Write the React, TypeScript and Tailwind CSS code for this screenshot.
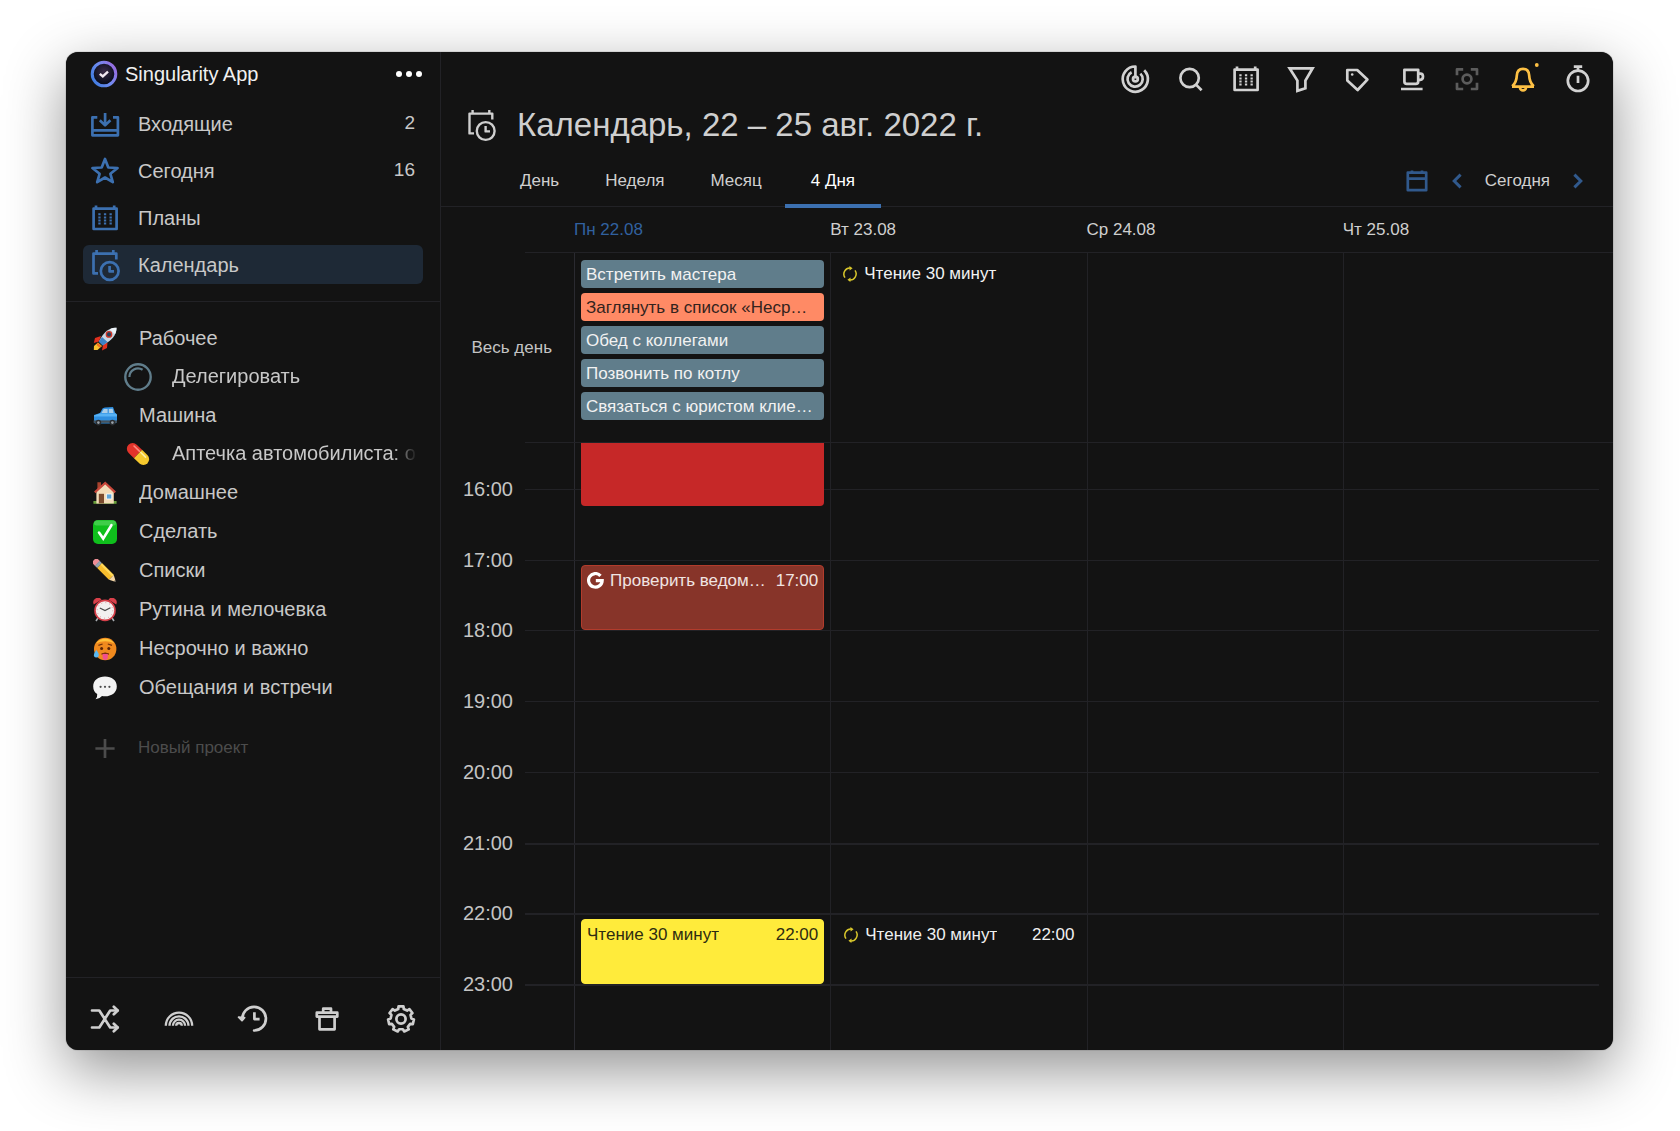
import React from "react";
import { clsx } from "clsx";

type IconProps = {
  className?: string;
  strokeWidth?: number;
  children?: React.ReactNode;
};

const Icon: React.FC<IconProps> = ({ className, strokeWidth = 2.7, children }) => (
  <svg
    viewBox="0 0 32 32"
    className={clsx("size-8 shrink-0 overflow-visible", className)}
    fill="none"
    stroke="currentColor"
    strokeWidth={strokeWidth}
    strokeLinejoin="round"
    aria-hidden="true"
  >
    {children}
  </svg>
);

const InboxIcon = () => (
  <Icon>
    <path d="M8.3 9.3H3.4V27.3H28.9V9.3H24M3.4 22.4H28.9" />
    <path d="M16.1 5V17M10.8 12.2L16.1 17.4L21.4 12.2" />
  </Icon>
);

const StarIcon = () => (
  <Icon>
    <path d="M16 4L19.3 12.5L28.6 13L21.4 18.8L23.8 27.2L16 22.5L8.2 27.2L10.6 18.8L3.4 13L12.7 12.5Z" />
  </Icon>
);

const PlansIcon = () => (
  <Icon>
    <path d="M4.6 6.6H27.6V27H4.6ZM7 3.6V7M25.2 3.6V7" />
    {[12.3, 15.4, 18.5, 21.6].map((y) => (
      <path key={y} strokeWidth={2} strokeLinejoin="miter" d={`M9.3 ${y}H11.6M14.9 ${y}H17.2M20.5 ${y}H22.8`} />
    ))}
  </Icon>
);

const CalendarClockIcon: React.FC<{ strokeWidth?: number }> = ({ strokeWidth }) => (
  <Icon strokeWidth={strokeWidth}>
    <path d="M9 24.4H4.5V4.6H27.3V10.6M7.6 1V4.6M24.3 1V4.6" />
    <circle cx="20.7" cy="22" r="8.9" />
    <path d="M20.6 17V22.4H25" />
  </Icon>
);

const ShuffleIcon = () => (
  <Icon>
    <path d="M3 7.5H10.3L21.2 24.5H28.5M3 24.5H10.3L21.2 7.5H28.5" strokeLinecap="round" />
    <path d="M24.8 3.8L28.7 7.5L24.8 11.3M24.8 20.8L28.7 24.5L24.8 28.2" strokeLinecap="round" />
  </Icon>
);

const RainbowIcon = () => (
  <Icon strokeWidth={2.3}>
    <path d="M2.8 22.8A13.2 13.2 0 0 1 29.2 22.8M6.5 22.8A9.5 9.5 0 0 1 25.5 22.8M9.9 22.8A6.1 6.1 0 0 1 22.1 22.8M13.2 22.8A2.8 2.8 0 0 1 18.8 22.8" />
  </Icon>
);

const HistoryIcon = () => (
  <Icon>
    <path d="M5.3 15.8A11.8 11.8 0 1 1 17.1 27.5" strokeLinecap="round" />
    <path d="M1.6 14.2L5 17.6L7.6 14.6Z" fill="currentColor" strokeWidth={1.8} />
    <path d="M17.4 9.3V16.1H22.6" />
  </Icon>
);

const TrashIcon = () => (
  <Icon>
    <path d="M8.5 13.6H23.6V26.3H8.5ZM5.8 9.7H26.3V13.6H5.8ZM12.2 5.7H20V9.7H12.2Z" />
  </Icon>
);

// seven teeth, each one a flat top between two short flanks
const gearPoints = Array.from({ length: 7 }, (_, i) => {
  const mid = (i * 2 * Math.PI) / 7 - Math.PI / 2;
  return [
    [-0.27, 10.4],
    [-0.19, 12.9],
    [0.19, 12.9],
    [0.27, 10.4],
  ].map(([a, r]) => `${16 + r * Math.cos(mid + a)},${16 + r * Math.sin(mid + a)}`);
})
  .flat()
  .join(" ");

const GearIcon = () => (
  <Icon>
    <polygon points={gearPoints} />
    <circle cx="16" cy="16" r="4.6" />
  </Icon>
);

const RadarIcon = () => (
  <Icon>
    <path d="M16.4 15.5V3.5A12.6 12.6 0 1 0 25.2 7.2" />
    <path d="M12.6 9.3A7.6 7.6 0 1 0 21.4 10.6" />
    <circle cx="16.4" cy="16" r="2.4" />
  </Icon>
);

const SearchIcon = () => (
  <Icon>
    <circle cx="15.6" cy="15" r="9.2" />
    <path d="M22 21.6L27.6 27.2" />
  </Icon>
);

const FunnelIcon = () => (
  <Icon>
    <path d="M4.6 5.3H27.6L20.4 17.6V25.2L12.4 27.8V17.6Z" strokeLinejoin="miter" />
  </Icon>
);

const TagIcon = () => (
  <Icon>
    <path d="M6.3 7H16.2L26.4 16.6L16.6 27L6.3 17.6Z" />
    <circle cx="11.2" cy="11.5" r="1.3" fill="currentColor" stroke="none" />
  </Icon>
);

const CupIcon = () => (
  <Icon>
    <path d="M8.4 6.8H22.2V18.4Q22.2 20.8 19.8 20.8H10.8Q8.4 20.8 8.4 18.4ZM22.2 10.6H24.4Q27 10.6 27 13.6T24.4 16.8H22.2M5 26H26.6" />
  </Icon>
);

const FocusIcon = () => (
  <Icon>
    <circle cx="16" cy="16" r="4.4" />
    <path d="M6 12.2V6.3H12.2M19.8 6.3H26V12.2M26 19.8V26H19.8M12.2 26H6V19.8" />
  </Icon>
);

const BellIcon = () => (
  <Icon>
    <path d="M5 23.6H27M5.2 23.2C9 20 9.6 17.4 9.8 12.6C10 8 12.4 5.8 16 5.8S22 8 22.2 12.6C22.4 17.4 23 20 26.8 23.2" />
    <path d="M13 24.4A3 3 0 0 0 19 24.4" />
    <circle cx="29.8" cy="2" r="1.9" fill="currentColor" stroke="none" />
  </Icon>
);

const TimerIcon = () => (
  <Icon>
    <circle cx="16" cy="17.8" r="10.2" />
    <path d="M11.8 3.6H20.2M16 3.6V7M16 12.8V20" />
  </Icon>
);

const DateIcon = () => (
  <Icon>
    <path d="M6.8 7.6H25.2V25.2H6.8ZM6.8 13.6H25.2M11 5.4V8M21 5.4V8" />
  </Icon>
);

const Chevron: React.FC<{ d: string }> = ({ d }) => (
  <Icon strokeWidth={3}>
    <path d={d} strokeLinejoin="miter" />
  </Icon>
);

const RepeatIcon = () => (
  <svg viewBox="0 0 16 16" className="size-4 shrink-0 text-[#d8c62c]" fill="none" stroke="currentColor" strokeWidth="1.5" aria-hidden="true">
    <path d="M8.8 2.2A6 6 0 0 0 3 11.6M7.2 13.8A6 6 0 0 0 13 4.4" />
    <path d="M7.4 0L10.6 2.2L7.6 4.4ZM8.6 11.6L5.4 13.8L8.4 16Z" fill="currentColor" stroke="none" />
  </svg>
);

const GoogleIcon = () => (
  <svg viewBox="0 0 16 16" className="size-[17px] shrink-0" fill="none" stroke="white" strokeWidth="3" aria-hidden="true">
    <path d="M12.7 3.6A6.4 6.4 0 1 0 14.3 8.1H8.3" />
  </svg>
);

const Logo = () => (
  <svg viewBox="0 0 28 28" className="size-7 shrink-0" aria-hidden="true">
    <defs>
      <linearGradient id="ring" x1="0" y1="0.8" x2="1" y2="0.2">
        <stop offset="0" stopColor="#3f7be0" />
        <stop offset="0.5" stopColor="#6f8cf0" />
        <stop offset="1" stopColor="#9a6be0" />
      </linearGradient>
      <radialGradient id="core" cx="0.5" cy="0.4">
        <stop offset="0" stopColor="#3a2b48" />
        <stop offset="1" stopColor="#0a0d1c" />
      </radialGradient>
    </defs>
    <circle cx="14" cy="14" r="11.8" fill="url(#core)" stroke="url(#ring)" strokeWidth="3" />
    <path d="M9.8 13.8L12.8 16.4L18 11.6" fill="none" stroke="#f2e9f2" strokeWidth="2.4" />
  </svg>
);

const Emoji: React.FC<{ children: React.ReactNode }> = ({ children }) => (
  <svg viewBox="0 0 24 24" className="size-6 shrink-0" aria-hidden="true">
    {children}
  </svg>
);

const Rocket = () => (
  <Emoji>
    <path d="M8 9L2 11L0.8 16L6 14.5ZM14.5 15.5L14 21L9 23.5L10 17.5Z" fill="#e0301e" />
    <path d="M5 15.5L9 19L4.5 23L0.8 23L1 19Z" fill="#f9c22e" />
    <path d="M4.4 15.6L8.8 19.6L6.4 20.6L3.6 18Z" fill="#f0701e" />
    <path d="M23.5 0.8C16 0.8 11 4.5 6 14.5L9.8 18.2C19 13.5 23.5 8 23.5 0.8Z" fill="#c9d6e2" />
    <path d="M9 10L5.8 14.8L9.8 18.4L14.5 15Z" fill="#3d83c6" />
    <path d="M23.5 0.8C20.6 0.8 18.6 1.3 16.8 2.2L22 7.2C23 5.4 23.5 3.2 23.5 0.8Z" fill="#eef3f7" />
    <circle cx="16" cy="7.4" r="2.7" fill="#26405c" stroke="#cf3325" strokeWidth="1.3" />
  </Emoji>
);

const Ring = () => (
  <svg viewBox="0 0 28 28" className="size-7 shrink-0 text-[#607d8b]" fill="none" stroke="currentColor" aria-hidden="true">
    <circle cx="14" cy="14" r="12.7" strokeWidth="2.4" />
    <path d="M5.4 14A8.6 8.6 0 0 1 18.6 6.7" strokeWidth="2.2" />
  </svg>
);

const Car = () => (
  <Emoji>
    <path d="M1 18V11L7 9L9.5 4.5Q10 3.6 12 3.4L20 3L22.2 9L24 10.5V18L22 19.6H2Z" fill="#2f8fe0" />
    <path d="M8.4 9L10.8 5H14.6V9ZM15.8 5L19.6 4.8L20.6 9H15.8Z" fill="#a9cde8" />
    <path d="M1 11.5L7 9.6H23L24 11V12.6H1Z" fill="#57b2f5" />
    <path d="M0.6 16.4H24V18.8H0.6Z" fill="#45525c" />
    <circle cx="5.4" cy="18.6" r="2.8" fill="#2b2e31" />
    <circle cx="19.4" cy="18.6" r="2.8" fill="#2b2e31" />
    <circle cx="5.4" cy="18.6" r="1.3" fill="#9aa3aa" />
    <circle cx="19.4" cy="18.6" r="1.3" fill="#9aa3aa" />
  </Emoji>
);

const Pill = () => (
  <Emoji>
    <g transform="rotate(44 12 12)">
      <path d="M12 6.2H4.6A5.8 5.8 0 0 0 4.6 17.8H12Z" fill="#e3342b" />
      <path d="M12 6.2H19.4A5.8 5.8 0 0 1 19.4 17.8H12Z" fill="#f6c92d" />
      <path d="M3.6 9H11" stroke="#ff8c80" strokeWidth="1.6" strokeLinecap="round" />
      <path d="M13 9H19.6" stroke="#fff0a0" strokeWidth="1.6" strokeLinecap="round" />
    </g>
  </Emoji>
);

const House = () => (
  <Emoji>
    <path d="M0.4 20H23.6V22.8H0.4Z" fill="#6aa03c" />
    <path d="M3.4 10L12.4 2.6L20.8 10V22.4H3.4Z" fill="#f3dcb8" />
    <path d="M4.4 1.2H8V6L4.4 9Z" fill="#a8432e" />
    <path d="M1.8 11.4L12.2 2L22.2 11.4" fill="none" stroke="#c8473a" strokeWidth="2.2" />
    <path d="M5.8 12.8H11V22.4H5.8Z" fill="#7b4b2e" />
    <path d="M13.4 13H18.8V18H13.4Z" fill="#5fa6d8" stroke="#fff" strokeWidth="0.8" />
  </Emoji>
);

const CheckMark = () => (
  <Emoji>
    <rect x="0" y="0" width="24" height="24" rx="5" fill="#0fbf1c" />
    <rect x="1" y="0.6" width="22" height="5" rx="2.5" fill="#5fd968" opacity="0.6" />
    <path d="M6 12.6L10.2 18.6L18.4 5.2" fill="none" stroke="#fff" strokeWidth="2.6" strokeLinecap="round" />
  </Emoji>
);

const Pencil = () => (
  <Emoji>
    <g transform="rotate(45 12 12)">
      <path d="M-2.2 8.6H1.4V15.4H-2.2Q-3.6 15.4 -3.6 14V10Q-3.6 8.6 -2.2 8.6Z" fill="#ee8e95" />
      <path d="M1 8.6H4.4V15.4H1Z" fill="#93a2ad" />
      <path d="M4.4 8.6H21V15.4H4.4Z" fill="#f7bd2d" />
      <path d="M4.4 8.6H21V10.8H4.4Z" fill="#ffd95a" />
      <path d="M21 8.6L27.4 12L21 15.4Z" fill="#f3d6a6" />
      <path d="M25.6 11L27.6 12L25.6 13Z" fill="#3b3b3b" />
    </g>
  </Emoji>
);

const AlarmClock = () => (
  <Emoji>
    <path d="M0.8 6.4A4.6 4.6 0 0 1 8.6 1.6ZM23.2 6.4A4.6 4.6 0 0 0 15.4 1.6Z" fill="#d8404a" />
    <path d="M5 20L3 23M19 20L21 23" stroke="#a8adb2" strokeWidth="1.6" />
    <circle cx="12" cy="12.4" r="10" fill="#f2f0ef" stroke="#d63f49" strokeWidth="1.6" />
    <circle cx="12" cy="12.4" r="7.8" fill="none" stroke="#e08a8e" strokeWidth="1" strokeDasharray="0.9 3.2" />
    <path d="M6.8 10L12 12.6L17.4 9.8" fill="none" stroke="#4a4a4a" strokeWidth="1.1" />
  </Emoji>
);

const HotFace = () => (
  <Emoji>
    <circle cx="12.2" cy="12" r="11.2" fill="#f08a1e" />
    <path d="M3 6.6A11 11 0 0 1 21.4 6.6A14 10 0 0 0 3 6.6Z" fill="#ffc23a" />
    <path d="M5.4 8.4L9.6 7M14.8 7L19 8.4" stroke="#70300c" strokeWidth="1.2" />
    <circle cx="8.6" cy="11.4" r="1.5" fill="#5a2408" />
    <circle cx="15.8" cy="11.4" r="1.5" fill="#5a2408" />
    <path d="M8.6 17Q12.2 14.8 15.8 17Z" fill="#7a2a10" stroke="#7a2a10" strokeWidth="1" />
    <path d="M9.6 17H14.8V20A2.6 3 0 0 1 9.6 20Z" fill="#f24f8c" />
    <path d="M3.4 13Q6.6 17 5.6 19.2A2.6 2.6 0 0 1 0.8 18.4Q0.8 16 3.4 13Z" fill="#58b8f2" />
  </Emoji>
);

const SpeechBalloon = () => (
  <Emoji>
    <path d="M12 0.6C18.8 0.6 23.8 4.4 23.8 10.4S18.8 20.2 12 20.2Q10.4 20.2 9 19.9Q6.6 22.8 2.6 23.2Q4.6 20.6 4.2 18Q0.2 15.4 0.2 10.4C0.2 4.4 5.2 0.6 12 0.6Z" fill="#f3f3f3" />
    <circle cx="7.6" cy="10.8" r="1.1" fill="#4a4a4a" />
    <circle cx="12" cy="10.8" r="1.1" fill="#4a4a4a" />
    <circle cx="16.4" cy="10.8" r="1.1" fill="#4a4a4a" />
  </Emoji>
);

const navItems = [
  { label: "Входящие", icon: <InboxIcon />, count: 2 },
  { label: "Сегодня", icon: <StarIcon />, count: 16 },
  { label: "Планы", icon: <PlansIcon /> },
  { label: "Календарь", icon: <CalendarClockIcon />, active: true },
];

const projects = [
  { label: "Рабочее", icon: <Rocket /> },
  { label: "Делегировать", icon: <Ring />, nested: true },
  { label: "Машина", icon: <Car /> },
  { label: "Аптечка автомобилиста: обновить", icon: <Pill />, nested: true },
  { label: "Домашнее", icon: <House /> },
  { label: "Сделать", icon: <CheckMark /> },
  { label: "Списки", icon: <Pencil /> },
  { label: "Рутина и мелочевка", icon: <AlarmClock /> },
  { label: "Несрочно и важно", icon: <HotFace /> },
  { label: "Обещания и встречи", icon: <SpeechBalloon /> },
];

const footerActions = [
  { label: "Перемешать", icon: <ShuffleIcon /> },
  { label: "Радуга", icon: <RainbowIcon /> },
  { label: "История", icon: <HistoryIcon /> },
  { label: "Корзина", icon: <TrashIcon /> },
  { label: "Настройки", icon: <GearIcon /> },
];

const toolbar = [
  { label: "Фокус дня", icon: <RadarIcon /> },
  { label: "Поиск", icon: <SearchIcon /> },
  { label: "Планы", icon: <PlansIcon /> },
  { label: "Фильтр", icon: <FunnelIcon /> },
  { label: "Теги", icon: <TagIcon /> },
  { label: "Перерыв", icon: <CupIcon /> },
  { label: "Режим фокуса", icon: <FocusIcon />, color: "text-[#5c5c5c]" },
  { label: "Уведомления", icon: <BellIcon />, color: "text-[#fdc044]" },
  { label: "Таймер", icon: <TimerIcon /> },
];

const tabs = ["День", "Неделя", "Месяц", "4 Дня"];
const days = ["Пн 22.08", "Вт 23.08", "Ср 24.08", "Чт 25.08"];

const allDay = [
  { title: "Встретить мастера" },
  { title: "Заглянуть в список «Несрочно и важно»", orange: true },
  { title: "Обед с коллегами" },
  { title: "Позвонить по котлу" },
  { title: "Связаться с юристом клиента" },
];

const hours = ["16:00", "17:00", "18:00", "19:00", "20:00", "21:00", "22:00"];

type CalendarEvent = {
  title: string;
  time: string;
  style: string;
  icon?: React.ReactNode;
};

// keyed by "hour/day index"
const events: Record<string, CalendarEvent> = {
  "17:00/0": {
    title: "Проверить ведомость",
    time: "17:00",
    style: "border-[#b23c2c] bg-[#873429] text-[#f0e4e2]",
    icon: <GoogleIcon />,
  },
  "22:00/0": {
    title: "Чтение 30 минут",
    time: "22:00",
    style: "border-[#ffeb3b] bg-[#ffeb3b] text-[#2e2b10]",
  },
  "22:00/1": {
    title: "Чтение 30 минут",
    time: "22:00",
    style: "border-transparent text-[#f0f0f0]",
    icon: <RepeatIcon />,
  },
};

const Sidebar: React.FC = () => (
  <aside className="flex w-[375px] shrink-0 flex-col border-r border-[#222226]">
    <div className="flex h-[43px] items-center pr-4 pl-6">
      <Logo />
      <span className="ml-[7px] flex-1 text-[20px] leading-6 text-[#f0f0f0]">Singularity App</span>
      <button aria-label="Меню" className="flex gap-1 p-0.5">
        <span className="size-[6px] rounded-full bg-white" />
        <span className="size-[6px] rounded-full bg-white" />
        <span className="size-[6px] rounded-full bg-white" />
      </button>
    </div>

    <nav className="flex flex-col gap-2 border-b border-[#222226] px-[17px] pt-[9px] pb-[17px]">
      {navItems.map((item) => (
        <button
          key={item.label}
          className={clsx(
            "flex h-[39px] items-center rounded-md pr-2 pl-[6px] text-left text-[20px] text-[#c8c8c8]",
            item.active && "bg-[#1e2936]"
          )}
        >
          <span className="text-[#3c70b0]">{item.icon}</span>
          <span className="ml-[17px] flex-1">{item.label}</span>
          {item.count && <span className="text-[19px]">{item.count}</span>}
        </button>
      ))}
    </nav>

    <ul className="flex flex-col pt-4 pr-[23px] pl-[23px]">
      {projects.map((project) => (
        <li key={project.label} className={clsx(project.nested && "pl-[33px]")}>
          <button
            className={clsx(
              "flex w-full items-center text-left text-[20px] text-[#c8c8c8]",
              project.nested ? "h-[38px]" : "h-[39px]"
            )}
          >
            <span className="flex w-8 shrink-0 justify-center pt-0.5">{project.icon}</span>
            <span
              className={clsx(
                "ml-[18px] flex-1 overflow-hidden whitespace-nowrap",
                project.nested && "[mask-image:linear-gradient(to_right,black_90%,transparent)]"
              )}
            >
              {project.label}
            </span>
          </button>
        </li>
      ))}
    </ul>

    <button className="mt-[22px] flex h-[39px] items-center pl-[23px] text-left text-[17px] text-[#4c4c4c]">
      <Icon>
        <path d="M16 7V26M6.4 16.5H25.6" />
      </Icon>
      <span className="ml-[17px]">Новый проект</span>
    </button>

    <div className="mt-auto flex h-[73px] items-center justify-between border-t border-[#222226] px-[23px] pt-2.5 text-[#cfcfcf]">
      {footerActions.map((action) => (
        <button key={action.label} aria-label={action.label}>
          {action.icon}
        </button>
      ))}
    </div>
  </aside>
);

const Header: React.FC = () => (
  <header>
    <div className="flex h-[43px] items-end justify-end pr-[19px]">
      <div className="flex w-[475px] justify-between">
        {toolbar.map((action) => (
          <button key={action.label} aria-label={action.label} className={action.color ?? "text-[#d2d2d2]"}>
            {action.icon}
          </button>
        ))}
      </div>
    </div>

    <div className="flex h-[60px] items-center gap-5 pl-6 text-[#cfcfcf]">
      <CalendarClockIcon strokeWidth={2.4} />
      <h1 className="text-[33px] leading-10">Календарь, 22 – 25 авг. 2022 г.</h1>
    </div>

    <div className="flex h-[52px] items-stretch border-b border-[#222226] pl-14 text-[17px] text-[#cfcfcf]">
      {tabs.map((tab, index) => (
        <button key={tab} className={clsx("relative", index === 3 ? "px-[26px] text-white" : "px-[23px]")}>
          {tab}
          {index === 3 && <span className="absolute inset-x-0 -bottom-0.5 h-1 bg-[#3c70b0]" />}
        </button>
      ))}
      <div className="ml-auto flex items-center pr-[19px] text-[#31598c]">
        <button aria-label="Выбрать дату">
          <DateIcon />
        </button>
        <button aria-label="Назад" className="ml-2">
          <Chevron d="M19.6 9.6L13.2 16L19.6 22.4" />
        </button>
        <button className="mx-[12px] text-[#cfcfcf]">Сегодня</button>
        <button aria-label="Вперёд">
          <Chevron d="M12.4 9.6L18.8 16L12.4 22.4" />
        </button>
      </div>
    </div>
  </header>
);

const EventCard: React.FC<{ event: CalendarEvent }> = ({ event }) => (
  <button className={clsx("flex w-full items-start gap-[6px] rounded border px-[5px] pt-0.5 text-left text-[17px]", event.style)}>
    <span className="flex min-w-0 flex-1 items-center gap-[6px]">
      {event.icon}
      <span className="truncate">{event.title}</span>
    </span>
    <span>{event.time}</span>
  </button>
);

const Calendar: React.FC = () => (
  <section className="flex flex-1 flex-col">
    <div className="flex h-[45px] items-center pr-3.5 pl-[133px] text-[17px]">
      {days.map((day, index) => (
        <div key={day} className={clsx("flex-1", index === 0 ? "text-[#31619f]" : "text-[#cfcfcf]")}>
          {day}
        </div>
      ))}
    </div>

    <div className="flex">
      <div className="flex w-[84px] shrink-0" />
      <div className="flex flex-1 border-y border-[#222226] pr-3.5">
        <div className="flex w-[49px] shrink-0 items-center justify-end pr-[22px] text-[17px] whitespace-nowrap text-[#c4c4c4]">
          Весь день
        </div>
        <div className="grid flex-1 grid-cols-4">
          <div className="flex min-w-0 flex-col gap-[5px] border-l border-[#2a2a30] px-[6px] pt-[7px] pb-[22px]">
            {allDay.map((event) => (
              <button
                key={event.title}
                className={clsx(
                  "h-7 truncate rounded pt-px pr-[11px] pl-[5px] text-left text-[17px]",
                  event.orange ? "bg-[#ff8a65] text-[#33231d]" : "bg-[#607d8b] text-[#f2f2f2]"
                )}
              >
                {event.title}
              </button>
            ))}
          </div>
          <div className="min-w-0 border-l border-[#222226] px-[11px] pt-[7px]">
            <button className="flex h-7 items-center gap-[6px] text-[17px] text-[#f2f2f2]">
              <RepeatIcon />
              Чтение 30 минут
            </button>
          </div>
          <div className="border-l border-[#222226]" />
          <div className="border-l border-[#222226]" />
        </div>
      </div>
    </div>

    <div className="flex flex-1 flex-col pr-3.5">
      <div className="grid h-[46px] grid-cols-4 pl-[133px]">
        <div className="relative border-l border-[#2a2a30]">
          <button aria-label="Событие" className="absolute inset-x-[6px] top-0 z-10 h-[63px] rounded-b bg-[#c62828]" />
        </div>
        <div className="border-l border-[#222226]" />
        <div className="border-l border-[#222226]" />
        <div className="border-l border-[#222226]" />
      </div>
      {[...hours, "23:00"].map((hour) => (
        <div key={hour} className={clsx("flex", hour === "23:00" ? "h-[66px]" : "min-h-[60px] flex-1")}>
          <div className="-mt-3 w-[84px] shrink-0 pr-3 text-right text-[20px] leading-6 text-[#c4c4c4]">{hour}</div>
          <div
            className={clsx(
              "grid flex-1 grid-cols-4 pl-[49px]",
              hour >= "21:00" ? "border-t-2 border-[#222226]" : "border-t border-[#222226]"
            )}
          >
            {days.map((day, index) => {
              const event = events[`${hour}/${index}`];
              return (
                <div
                  key={day}
                  className={clsx(
                    "flex min-w-0 border-l px-[6px] pt-1",
                    index === 0 ? "border-[#2a2a30]" : "border-[#222226]"
                  )}
                >
                  {event && <EventCard event={event} />}
                </div>
              );
            })}
          </div>
        </div>
      ))}
    </div>
  </section>
);

const App: React.FC = () => {
  return (
    <div className="flex min-h-screen bg-white pt-[52px] pr-[67px] pb-[81px] pl-[66px] font-['Liberation_Sans',Arial,sans-serif]">
      <div className="flex flex-1 overflow-hidden rounded-xl bg-[#131313] shadow-[0_0_1px_rgba(0,0,0,0.8),0_20px_60px_rgba(0,0,0,0.43)]">
        <Sidebar />
        <main className="flex min-w-0 flex-1 flex-col">
          <Header />
          <Calendar />
        </main>
      </div>
    </div>
  );
};

export default App;
